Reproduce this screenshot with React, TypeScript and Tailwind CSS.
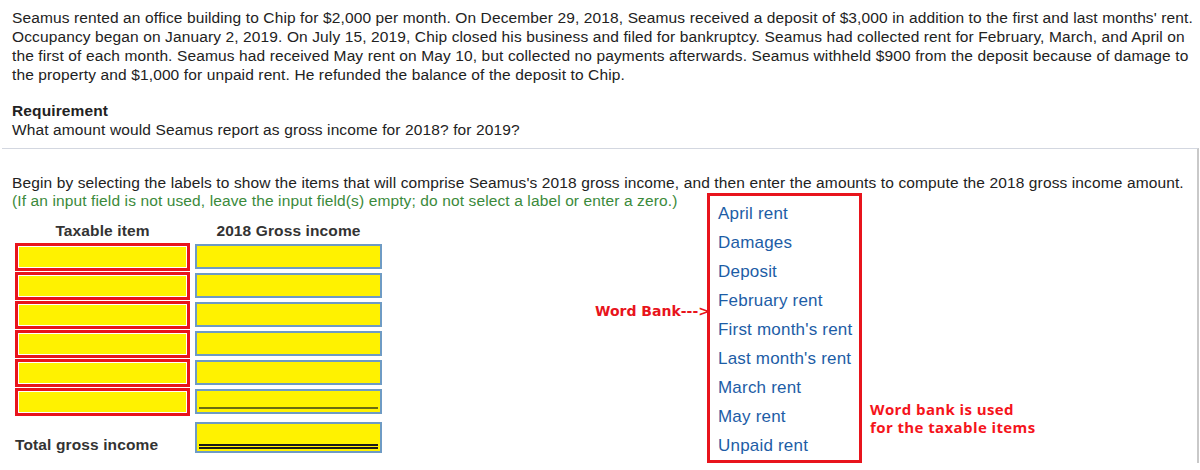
const bank = [
  "April rent",
  "Damages",
  "Deposit",
  "February rent",
  "First month's rent",
  "Last month's rent",
  "March rent",
  "May rent",
  "Unpaid rent",
];

const story = [
  "Seamus rented an office building to Chip for $2,000 per month. On December 29, 2018, Seamus received a deposit of $3,000 in addition to the first and last months' rent.",
  "Occupancy began on January 2, 2019. On July 15, 2019, Chip closed his business and filed for bankruptcy. Seamus had collected rent for February, March, and April on",
  "the first of each month. Seamus had received May rent on May 10, but collected no payments afterwards. Seamus withheld $900 from the deposit because of damage to",
  "the property and $1,000 for unpaid rent. He refunded the balance of the deposit to Chip.",
];

const rows = [0, 1, 2, 3, 4, 5];

export default function App() {
  return (
    <div className="w-[1200px] h-[470px] overflow-hidden bg-white font-['Liberation_Sans',Arial,sans-serif] text-[15.5px] tracking-[0.12px] text-[#222]">
      <div className="px-3 pt-[8px]">
        <div className="leading-[19px]">
          {story.map((l) => (
            <p key={l} className="whitespace-nowrap">
              {l}
            </p>
          ))}
        </div>
        <p className="mt-[17px] font-bold leading-[19px]">Requirement</p>
        <p className="leading-[19px]">What amount would Seamus report as gross income for 2018? for 2019?</p>
      </div>

      <div className="mt-[9px] ml-[2px] w-[1197px] border-t border-t-[#d3d7e0] border-r-2 border-r-[#c9c9c9] pl-[10px] pt-[25px]">
        <p className="leading-[18px] whitespace-nowrap">
          Begin by selecting the labels to show the items that will comprise Seamus's 2018 gross income, and then enter the
          amounts to compute the 2018 gross income amount.
        </p>
        <div className="flex items-start">
          <div className="w-[583px]">
            <p className="leading-[18px] text-[#3b8a3b] whitespace-nowrap">
              (If an input field is not used, leave the input field(s) empty; do not select a label or enter a zero.)
            </p>
            <div className="ml-[3px] mt-[12px]">
              <div className="flex gap-[5px] font-bold text-[#333] leading-[18px]">
                <div className="w-[175px] text-center">Taxable item</div>
                <div className="w-[187px] text-center whitespace-nowrap">2018 Gross income</div>
              </div>
              <div className="mt-[3px]">
                {rows.map((r) => (
                  <div key={r} className="flex gap-[5px] h-[29px]">
                    <div className="w-[175px] h-[28px] border-[3px] border-[#e8141c] p-[1px] bg-white">
                      <div className="h-full bg-[#fff200]" />
                    </div>
                    <div className="w-[187px] mt-[1px] h-[25px] border-2 border-[#6e9bc4] bg-[#fff200] flex flex-col justify-end px-[2px] pb-[3px]">
                      {r === 5 && <div className="h-[2px] bg-[#6b6b10]" />}
                    </div>
                  </div>
                ))}
                <div className="flex gap-[5px]">
                  <div className="w-[175px] pt-[19px] font-bold text-[#333] leading-[18px] whitespace-nowrap">
                    Total gross income
                  </div>
                  <div className="w-[187px] mt-[5px] h-[31px] border-2 border-[#6e9bc4] bg-[#fff200] flex flex-col justify-end px-[2px] pb-[2px]">
                    <div className="h-[2px] bg-[#1a1a1a]" />
                    <div className="h-[1px]" />
                    <div className="h-[2px] bg-[#1a1a1a]" />
                  </div>
                </div>
              </div>
            </div>
          </div>

          <div className="w-[112px] mt-[111px] text-right whitespace-nowrap font-['DejaVu_Sans',Verdana,sans-serif] font-bold text-[14px] tracking-normal leading-[16px] text-[#e8141c]">
            Word Bank---&gt;
          </div>

          <div className="mt-[1px] w-[155px] border-[3px] border-[#e8141c] pl-[8px] pt-[3px]">
            {bank.map((b) => (
              <div key={b} className="text-[17px] tracking-[0.2px] leading-[29px] text-[#1d5da6] whitespace-nowrap">
                {b}
              </div>
            ))}
          </div>

          <div className="ml-[8px] mt-[208px] font-['Open_Sans',sans-serif] font-bold text-[15px] tracking-[0.4px] leading-[18px] text-[#f5141c] whitespace-nowrap">
            <div>Word bank is used</div>
            <div>for the taxable items</div>
          </div>
        </div>
      </div>
    </div>
  );
}
